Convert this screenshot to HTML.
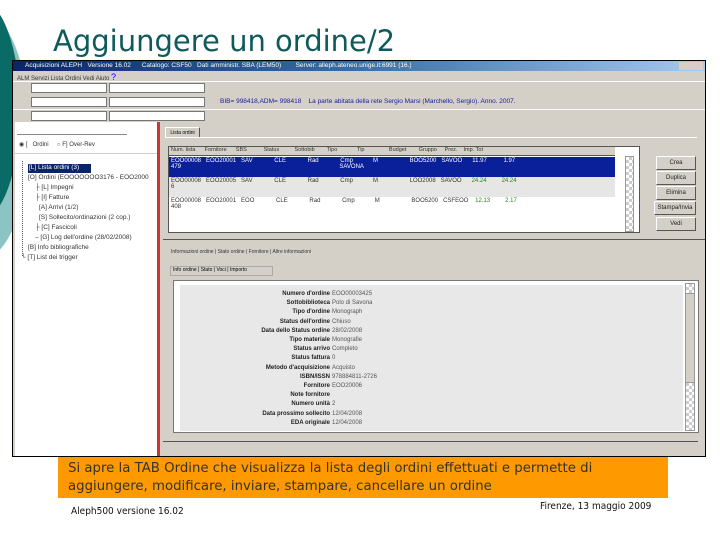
<!DOCTYPE html>
<html><head><meta charset="utf-8"><style>
*{margin:0;padding:0;box-sizing:border-box}
body{width:720px;height:540px;position:relative;overflow:hidden;background:#fff;font-family:"Liberation Sans",sans-serif}
.a{position:absolute}
.s{font-size:7px;color:#333;white-space:nowrap}
.btn{position:absolute;background:#d4d0c8;border:1px solid;border-color:#fff #555 #555 #fff;font-size:6px;text-align:center;line-height:12px;color:#222}
</style></head><body>
<div class="a" style="left:-70px;top:10px;width:100px;height:250px;border-radius:50%;background:#8cc4c4"></div>
<div class="a" style="left:-60px;top:0px;width:80px;height:220px;border-radius:50%;background:#0a6b66"></div>
<div class="a" style="left:53px;top:24px;font-family:'Comic Sans MS','DejaVu Sans',sans-serif;font-size:29px;color:#0f5a5a;letter-spacing:0px">Aggiungere un ordine/2</div>
<div class="a" style="left:12px;top:60px;width:694px;height:397px;background:#d4d0c8;border:1px solid #000">
 <div class="a" style="left:0;top:0;width:692px;height:10px;background:linear-gradient(90deg,#0a246a,#3a6ea5 50%,#a6caf0)"></div>
 <div class="a s" style="left:12px;top:1px;color:#fff;font-size:6.5px">Acquisizioni ALEPH &nbsp; Versione 16.02 &nbsp;&nbsp;&nbsp;&nbsp; Catalogo: CSF50 &nbsp; Dati amministr. SBA (LEM50) &nbsp;&nbsp;&nbsp;&nbsp;&nbsp;&nbsp; Server: alleph.ateneo.unige.it:6991 (16.)</div>
 <div class="a" style="left:666px;top:1px;width:24px;height:8px;background:#d4d0c8"></div>
 <div class="a s" style="left:4px;top:11px;font-size:6px">ALM Servizi Lista Ordini Vedi Aiuto <span style="color:#00f;font-size:9px">?</span></div>
 <div class="a" style="left:0;top:20px;width:692px;height:1px;background:#fff"></div>
 <div class="a" style="left:18px;top:22px;width:76px;height:10px;background:#fff;border:1px solid #777"></div>
 <div class="a" style="left:96px;top:22px;width:96px;height:10px;background:#fff;border:1px solid #777"></div>
 <div class="a" style="left:18px;top:36px;width:76px;height:10px;background:#fff;border:1px solid #777"></div>
 <div class="a" style="left:96px;top:36px;width:96px;height:10px;background:#fff;border:1px solid #777"></div>
 <div class="a s" style="left:207px;top:37px;color:#1a1aa0;font-size:6.5px">BIB= 998418,ADM= 998418 &nbsp;&nbsp; La parte abitata della rete Sergio Marsi (Marchello, Sergio). Anno. 2007.</div>
 <div class="a" style="left:0;top:48px;width:692px;height:1px;background:#fff"></div>
 <div class="a" style="left:18px;top:50px;width:76px;height:10px;background:#fff;border:1px solid #777"></div>
 <div class="a" style="left:96px;top:50px;width:96px;height:10px;background:#fff;border:1px solid #777"></div>
 <div class="a" style="left:2px;top:61px;width:143px;height:334px;background:#fff"></div>
 <div class="a" style="left:144px;top:61px;width:3px;height:334px;background:#c33"></div>
 <div class="a" style="left:4px;top:62px;width:110px;height:12px;border-bottom:1px solid #888"></div>
 <div class="a s" style="left:6px;top:80px;font-size:6px">◉ [ &nbsp; Ordini &nbsp;&nbsp;&nbsp; ○ F] Over-Rev</div>
 <div class="a" style="left:2px;top:92px;width:142px;height:1px;background:#ccc"></div>
 <div class="a" style="left:15px;top:103px;width:63px;height:9px;background:#0a246a"></div>
 <div class="a s" style="left:16px;top:103px;color:#fff;font-size:6.5px">[L] Lista ordini (3)</div>
 <div class="a s" style="left:15px;top:113px;font-size:6.5px">[O] Ordini (EOOOOOOO3176 - EOO2000</div>
 <div class="a s" style="left:22px;top:123px;font-size:6.5px">├ [L] Impegni</div>
 <div class="a s" style="left:22px;top:133px;font-size:6.5px">├ [I] Fatture</div>
 <div class="a s" style="left:26px;top:143px;font-size:6.5px">[A] Arrivi (1/2)</div>
 <div class="a s" style="left:26px;top:153px;font-size:6.5px">[S] Sollecito/ordinazioni (2 cop.)</div>
 <div class="a s" style="left:22px;top:163px;font-size:6.5px">├ [C] Fascicoli</div>
 <div class="a s" style="left:22px;top:173px;font-size:6.5px">– [G] Log dell'ordine (28/02/2008)</div>
 <div class="a s" style="left:15px;top:183px;font-size:6.5px">[B] Info bibliografiche</div>
 <div class="a s" style="left:8px;top:193px;font-size:6.5px">└ [T] List dei trigger</div>
 <div class="a" style="left:9px;top:100px;width:1px;height:95px;border-left:1px dotted #555"></div>
 <div class="a" style="left:152px;top:66px;width:35px;height:11px;border:1px solid;border-color:#fff #555 #d4d0c8 #fff;font-size:5px;line-height:10px;text-align:center">Lista ordini</div>
 <div class="a" style="left:152px;top:76px;width:532px;height:1px;background:#fff"></div>
 <div class="a" style="left:155px;top:85px;width:472px;height:87px;background:#fff;border:1px solid #555"></div>
 <div class="a" style="left:156px;top:86px;width:446px;height:9px;background:#d4d0c8;border-bottom:1px solid #555;font-size:5.5px;color:#333;white-space:nowrap;padding-left:2px">Num. lista &nbsp;&nbsp;&nbsp;&nbsp; Fornitore &nbsp;&nbsp;&nbsp;&nbsp; SBS &nbsp;&nbsp;&nbsp;&nbsp;&nbsp;&nbsp;&nbsp;&nbsp;&nbsp; Status &nbsp;&nbsp;&nbsp;&nbsp;&nbsp;&nbsp;&nbsp;&nbsp; Sottobib &nbsp;&nbsp;&nbsp;&nbsp;&nbsp;&nbsp; Tipo &nbsp;&nbsp;&nbsp;&nbsp;&nbsp;&nbsp;&nbsp;&nbsp;&nbsp;&nbsp;&nbsp; Tip &nbsp;&nbsp;&nbsp;&nbsp;&nbsp;&nbsp;&nbsp;&nbsp;&nbsp;&nbsp;&nbsp;&nbsp;&nbsp;&nbsp; Budget &nbsp;&nbsp;&nbsp;&nbsp;&nbsp;&nbsp; Gruppo &nbsp;&nbsp;&nbsp; Prez. &nbsp;&nbsp; Imp. Tot</div>
 <div class="a" style="left:156px;top:96px;width:446px;height:20px;background:#0a1f9a;color:#fff;font-size:6px;white-space:nowrap;padding:1px 2px">EOO00008 &nbsp; EOO20001 &nbsp; SAV &nbsp;&nbsp;&nbsp;&nbsp;&nbsp;&nbsp;&nbsp;&nbsp;&nbsp;&nbsp;&nbsp; CLE &nbsp;&nbsp;&nbsp;&nbsp;&nbsp;&nbsp;&nbsp;&nbsp;&nbsp;&nbsp;&nbsp; Rad &nbsp;&nbsp;&nbsp;&nbsp;&nbsp;&nbsp;&nbsp;&nbsp;&nbsp;&nbsp;&nbsp; Cmp &nbsp;&nbsp;&nbsp;&nbsp;&nbsp;&nbsp;&nbsp;&nbsp;&nbsp;&nbsp; M &nbsp;&nbsp;&nbsp;&nbsp;&nbsp;&nbsp;&nbsp;&nbsp;&nbsp;&nbsp;&nbsp;&nbsp;&nbsp;&nbsp;&nbsp;&nbsp;&nbsp; BOO5200 &nbsp; SAVOO &nbsp;&nbsp;&nbsp;&nbsp; 11.97 &nbsp;&nbsp;&nbsp;&nbsp;&nbsp;&nbsp;&nbsp;&nbsp; 1.97<br>479 &nbsp;&nbsp;&nbsp;&nbsp;&nbsp;&nbsp;&nbsp;&nbsp;&nbsp;&nbsp;&nbsp;&nbsp;&nbsp;&nbsp;&nbsp;&nbsp;&nbsp;&nbsp;&nbsp;&nbsp;&nbsp;&nbsp;&nbsp;&nbsp;&nbsp;&nbsp;&nbsp;&nbsp;&nbsp;&nbsp;&nbsp;&nbsp;&nbsp;&nbsp;&nbsp;&nbsp;&nbsp;&nbsp;&nbsp;&nbsp;&nbsp;&nbsp;&nbsp;&nbsp;&nbsp;&nbsp;&nbsp;&nbsp;&nbsp;&nbsp;&nbsp;&nbsp;&nbsp;&nbsp;&nbsp;&nbsp;&nbsp;&nbsp;&nbsp;&nbsp;&nbsp;&nbsp;&nbsp;&nbsp;&nbsp;&nbsp;&nbsp;&nbsp;&nbsp;&nbsp;&nbsp;&nbsp;&nbsp;&nbsp;&nbsp;&nbsp;&nbsp;&nbsp;&nbsp;&nbsp;&nbsp;&nbsp;&nbsp;&nbsp;&nbsp;&nbsp;&nbsp;&nbsp;&nbsp;&nbsp;&nbsp;&nbsp;&nbsp; SAVONA</div>
 <div class="a" style="left:156px;top:116px;width:446px;height:20px;background:#e6e6e6;color:#333;font-size:6px;white-space:nowrap;padding:1px 2px">EOO00008 &nbsp; EOO20005 &nbsp; SAV &nbsp;&nbsp;&nbsp;&nbsp;&nbsp;&nbsp;&nbsp;&nbsp;&nbsp;&nbsp;&nbsp; CLE &nbsp;&nbsp;&nbsp;&nbsp;&nbsp;&nbsp;&nbsp;&nbsp;&nbsp;&nbsp;&nbsp; Rad &nbsp;&nbsp;&nbsp;&nbsp;&nbsp;&nbsp;&nbsp;&nbsp;&nbsp;&nbsp;&nbsp; Cmp &nbsp;&nbsp;&nbsp;&nbsp;&nbsp;&nbsp;&nbsp;&nbsp;&nbsp;&nbsp; M &nbsp;&nbsp;&nbsp;&nbsp;&nbsp;&nbsp;&nbsp;&nbsp;&nbsp;&nbsp;&nbsp;&nbsp;&nbsp;&nbsp;&nbsp;&nbsp;&nbsp; LOO2008 &nbsp; SAVOO &nbsp;&nbsp;&nbsp;&nbsp; <span style="color:#1a8a1a">24.24 &nbsp;&nbsp;&nbsp;&nbsp;&nbsp;&nbsp;&nbsp; 24.24</span><br>6</div>
 <div class="a" style="left:156px;top:136px;width:446px;height:30px;background:#fff;color:#333;font-size:6px;white-space:nowrap;padding:1px 2px">EOO00008 &nbsp; EOO20001 &nbsp; EOO &nbsp;&nbsp;&nbsp;&nbsp;&nbsp;&nbsp;&nbsp;&nbsp;&nbsp;&nbsp;&nbsp; CLE &nbsp;&nbsp;&nbsp;&nbsp;&nbsp;&nbsp;&nbsp;&nbsp;&nbsp;&nbsp;&nbsp; Rad &nbsp;&nbsp;&nbsp;&nbsp;&nbsp;&nbsp;&nbsp;&nbsp;&nbsp;&nbsp;&nbsp; Cmp &nbsp;&nbsp;&nbsp;&nbsp;&nbsp;&nbsp;&nbsp;&nbsp;&nbsp;&nbsp; M &nbsp;&nbsp;&nbsp;&nbsp;&nbsp;&nbsp;&nbsp;&nbsp;&nbsp;&nbsp;&nbsp;&nbsp;&nbsp;&nbsp;&nbsp;&nbsp;&nbsp; BOO5200 &nbsp; CSFEOO &nbsp;&nbsp; <span style="color:#1a8a1a">12.13 &nbsp;&nbsp;&nbsp;&nbsp;&nbsp;&nbsp;&nbsp; 2.17</span><br>408</div>
 <div class="a" style="left:612px;top:95px;width:9px;height:76px;background:repeating-conic-gradient(#ccc 0 25%,#fff 0 50%) 0 0/6px 6px;border:1px solid #999"></div>
 <div class="btn" style="left:643px;top:95px;width:40px;height:14px">Crea</div>
 <div class="btn" style="left:643px;top:110px;width:40px;height:14px">Duplica</div>
 <div class="btn" style="left:643px;top:125px;width:40px;height:14px">Elimina</div>
 <div class="btn" style="left:641px;top:140px;width:42px;height:14px">Stampa/Invia</div>
 <div class="btn" style="left:643px;top:156px;width:40px;height:14px">Vedi</div>
 <div class="a" style="left:150px;top:178px;width:542px;height:1px;background:#555"></div>
 <div class="a s" style="left:158px;top:188px;font-size:5px">Informazioni ordine | Stato ordine | Fornitore | Altre informazioni</div>
 <div class="a" style="left:157px;top:205px;width:103px;height:10px;border:1px solid #aaa;font-size:5px;padding-left:2px">Info ordine | Stato | Voci | Importo</div>
 <div class="a" style="left:160px;top:219px;width:526px;height:153px;background:#fff;border:1px solid #777"></div>
 <div class="a" style="left:167px;top:224px;width:503px;height:146px;background:#e8e8e8"></div>
 <div class="a" style="left:672px;top:222px;width:10px;height:148px;background:repeating-conic-gradient(#ccc 0 25%,#fff 0 50%) 0 0/6px 6px;border:1px solid #999"></div>
 <div class="a" style="left:672px;top:232px;width:10px;height:90px;background:#d4d0c8;border:1px solid #999"></div>
 <div class="a" style="left:167px;top:229px;width:440px;font-size:6px;line-height:9.2px;color:#222;white-space:nowrap">
  <div style="display:flex"><div style="width:152px;text-align:right;padding-right:2px;font-weight:bold">Numero d'ordine<br>Sottobiblioteca<br>Tipo d'ordine<br>Status dell'ordine<br>Data dello Status ordine<br>Tipo materiale<br>Status arrivo<br>Status fattura<br>Metodo d'acquisizione<br>ISBN/ISSN<br>Fornitore<br>Note fornitore<br>Numero unità<br>Data prossimo sollecito<br>EDA originale</div><div style="color:#555">EOO00003425<br>Polo di Savona<br>Monograph<br>Chiuso<br>28/02/2008<br>Monografie<br>Completo<br>0<br>Acquisto<br>978884811-2726<br>EOO20006<br><br>2<br>12/04/2008<br>12/04/2008</div></div></div>
 <div class="a" style="left:150px;top:380px;width:535px;height:1px;background:#555"></div>
</div>
<div class="a" style="left:58px;top:457px;width:610px;height:41px;background:#ff9900"></div>
<div class="a" style="left:68px;top:460px;font-family:'Comic Sans MS','DejaVu Sans',sans-serif;font-size:13.3px;line-height:18px;color:#333">Si apre la TAB Ordine che visualizza la lista degli ordini effettuati e permette di<br>aggiungere, modificare, inviare, stampare, cancellare un ordine</div>
<div class="a" style="left:71px;top:506px;font-size:10px;color:#111;font-family:'DejaVu Sans Condensed','Liberation Sans Narrow',sans-serif">Aleph500 versione 16.02</div>
<div class="a" style="left:540px;top:501px;font-size:10px;color:#111;font-family:'DejaVu Sans Condensed','Liberation Sans Narrow',sans-serif">Firenze, 13 maggio 2009</div>
</body></html>
